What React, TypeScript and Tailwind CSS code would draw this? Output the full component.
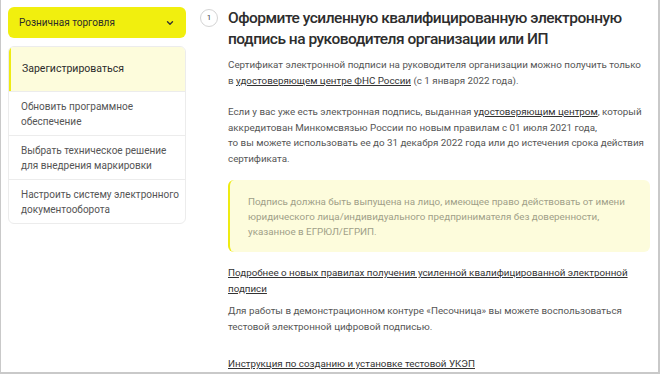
import React from "react";

export default function App() {
  const items = [
    ["Обновить программное", "обеспечение"],
    ["Выбрать техническое решение", "для внедрения маркировки"],
    ["Настроить систему электронного", "документооборота"],
  ];
  return (
    <div
      className="w-[660px] h-[374px] overflow-hidden bg-white border-l border-r-2 border-b-2 border-[#c9c9c9] flex"
      style={{ fontFamily: 'Roboto, "Noto Sans", sans-serif' }}
    >
      <aside className="w-[178px] ml-[7px] mt-[7px] flex flex-col shrink-0">
        <div className="h-[31px] rounded-[6px] bg-[#f1ef0e] flex items-center justify-between pl-[11px] pr-[12px]">
          <span className="text-[10px] text-[#2b2b2b]">Розничная торговля</span>
          <svg width="8" height="6" viewBox="0 0 8 6" className="mt-[1px]">
            <path d="M1.5 1.8 L4 4.3 L6.5 1.8" fill="none" stroke="#333" strokeWidth="1.4" strokeLinecap="round" strokeLinejoin="round" />
          </svg>
        </div>
        <div className="mt-[8px] rounded-[6px] border border-[#ececec] overflow-hidden flex flex-col">
          <div className="h-[44px] bg-[#fdfcdc] border-l-2 border-[#eeeb12] flex items-center pl-[11px]">
            <span className="text-[10.5px] text-[#2b2b2b]">Зарегистрироваться</span>
          </div>
          {items.map((t, i) => (
            <div
              key={i}
              className="h-[44px] border-t border-[#ececec] flex flex-col justify-center pl-[12px] pr-[4px]"
            >
              <span className="text-[10px] leading-[15px] text-[#555] whitespace-nowrap">{t[0]}</span>
              <span className="text-[10px] leading-[15px] text-[#555] whitespace-nowrap">{t[1]}</span>
            </div>
          ))}
        </div>
      </aside>
      <main className="ml-[14px] mt-[9px] flex-1 flex gap-[10px] pr-[6px]">
        <div className="w-[18px] h-[18px] rounded-full border border-[#d4d4d4] flex items-center justify-center shrink-0">
          <span className="text-[8px] text-[#444] leading-none">1</span>
        </div>
        <div className="flex-1 flex flex-col">
          <h1 className="text-[15.5px] leading-[21px] font-medium tracking-[-0.5px] text-[#2d2d2d] -mt-[1px] whitespace-nowrap">
            Оформите усиленную квалифицированную электронную
            <br />
            подпись на руководителя организации или ИП
          </h1>
          <div className="mt-[7px] text-[9.8px] leading-[15.5px] text-[#555] whitespace-nowrap">
            <p>
              Сертификат электронной подписи на руководителя организации можно получить только
              <br />в <span className="underline text-[#333]">удостоверяющем центре ФНС России</span> (с 1 января 2022 года).
            </p>
            <p className="mt-[16px]">
              Если у вас уже есть электронная подпись, выданная{" "}
              <span className="underline text-[#333]">удостоверяющим центром</span>, который
              <br />
              аккредитован Минкомсвязью России по новым правилам с 01 июля 2021 года,
              <br />
              то вы можете использовать ее до 31 декабря 2022 года или до истечения срока действия
              <br />
              сертификата.
            </p>
          </div>
          <div className="mt-[14px] h-[76px] rounded-[6px] bg-[#fdfcdc] border-l-2 border-[#eeeb12] pl-[18px] pr-[12px] flex items-center mr-[2px]">
            <p className="text-[9.8px] leading-[15px] text-[#a09f88]">
              Подпись должна быть выпущена на лицо, имеющее право действовать от имени
              <br />
              юридического лица/индивидуального предпринимателя без доверенности,
              <br />
              указанное в ЕГРЮЛ/ЕГРИП.
            </p>
          </div>
          <p className="mt-[13px] text-[9.8px] leading-[16px] text-[#333] underline">
            Подробнее о новых правилах получения усиленной квалифицированной электронной
            <br />
            подписи
          </p>
          <p className="mt-[6px] text-[9.8px] leading-[15.5px] text-[#555]">
            Для работы в демонстрационном контуре «Песочница» вы можете воспользоваться
            <br />
            тестовой электронной цифровой подписью.
          </p>
          <p className="mt-[22px] text-[9.8px] leading-[16px] text-[#333] underline">
            Инструкция по созданию и установке тестовой УКЭП
          </p>
        </div>
      </main>
    </div>
  );
}
